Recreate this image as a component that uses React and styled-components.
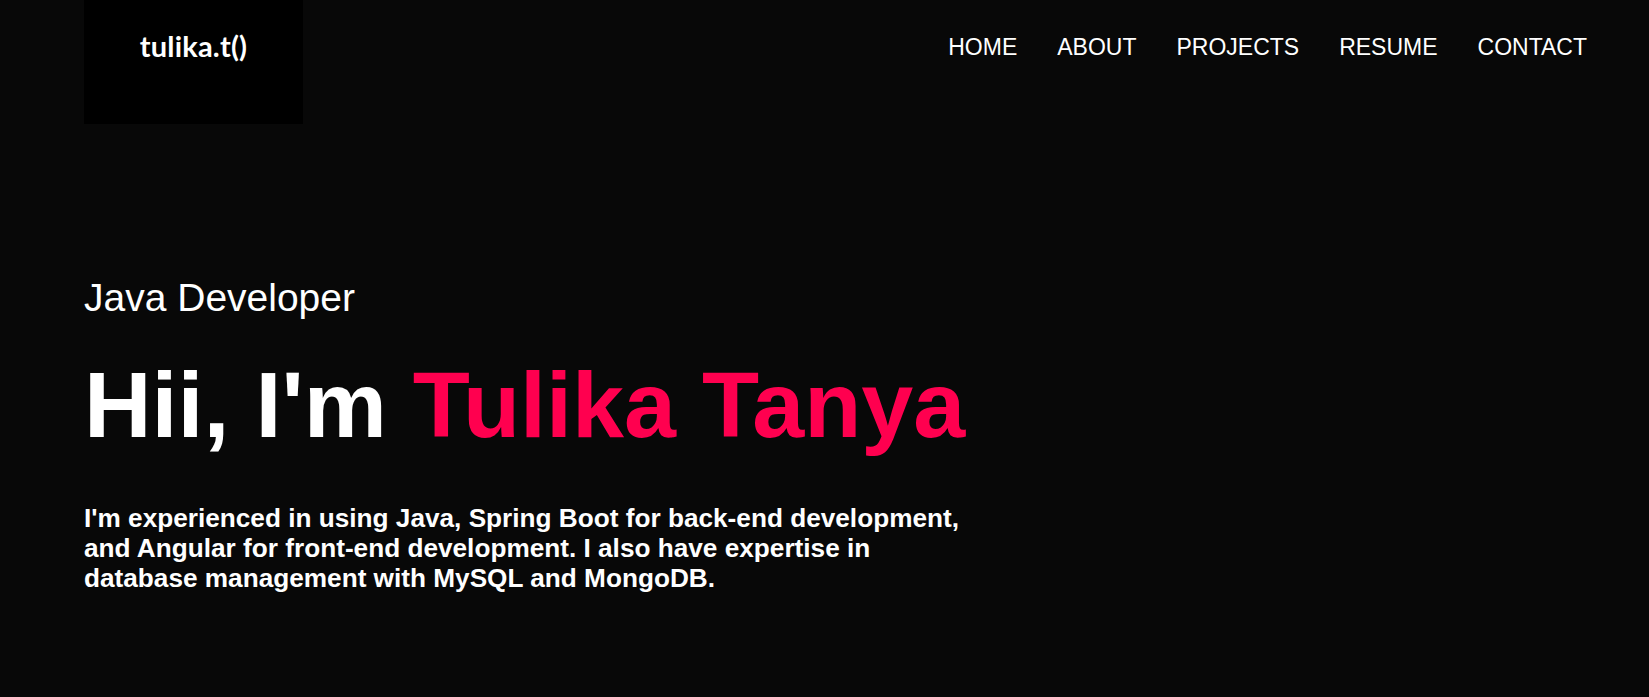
import React from "react";
import styled, { createGlobalStyle } from "styled-components";

const GlobalStyle = createGlobalStyle`
  html, body {
    margin: 0;
    padding: 0;
    background: #080808;
  }
  body {
    font-family: "Liberation Sans", Arial, sans-serif;
    color: #ffffff;
  }
  * { box-sizing: border-box; }
`;

const Page = styled.div`
  min-height: 697px;
  background: #080808;
  padding: 0 62px 0 84px;
`;

const Header = styled.header`
  display: flex;
  justify-content: space-between;
  align-items: flex-start;
`;

const LogoBox = styled.div`
  width: 219px;
  height: 124px;
  background: #000000;
  display: flex;
  justify-content: center;
  padding-top: 29px;
`;

const LogoText = styled.span`
  font-family: "Lato", "Open Sans", sans-serif;
  font-weight: 700;
  font-size: 29px;
  line-height: 1.2;
  letter-spacing: 0.2px;
  color: #ffffff;
`;

const Nav = styled.nav`
  display: flex;
  gap: 40px;
  padding-top: 34px;
`;

const NavLink = styled.a`
  font-family: "Liberation Sans", Arial, sans-serif;
  font-size: 23px;
  line-height: normal;
  color: #ffffff;
  text-decoration: none;
`;

const Hero = styled.section`
  padding-top: 152px;
  display: flex;
  flex-direction: column;
`;

const Role = styled.p`
  margin: 0;
  font-size: 39px;
  line-height: normal;
  font-weight: 400;
`;

const Title = styled.h1`
  margin: 31px 0 0;
  font-size: 93.5px;
  font-weight: 700;
  line-height: normal;
  white-space: nowrap;
`;

const Highlight = styled.span`
  color: #ff004f;
`;

const Intro = styled.p`
  margin: 44px 0 0;
  max-width: 890px;
  font-size: 26.2px;
  font-weight: 700;
  line-height: 30px;
`;

const links = ["HOME", "ABOUT", "PROJECTS", "RESUME", "CONTACT"];

export default function App() {
  return (
    <>
      <GlobalStyle />
      <Page>
        <Header>
          <LogoBox>
            <LogoText>tulika.t()</LogoText>
          </LogoBox>
          <Nav>
            {links.map((l) => (
              <NavLink key={l} href="#">
                {l}
              </NavLink>
            ))}
          </Nav>
        </Header>
        <Hero>
          <Role>Java Developer</Role>
          <Title>
            Hii, I'm <Highlight>Tulika Tanya</Highlight>
          </Title>
          <Intro>
            I'm experienced in using Java, Spring Boot for back-end development,
            and Angular for front-end development. I also have expertise in
            database management with MySQL and MongoDB.
          </Intro>
        </Hero>
      </Page>
    </>
  );
}
